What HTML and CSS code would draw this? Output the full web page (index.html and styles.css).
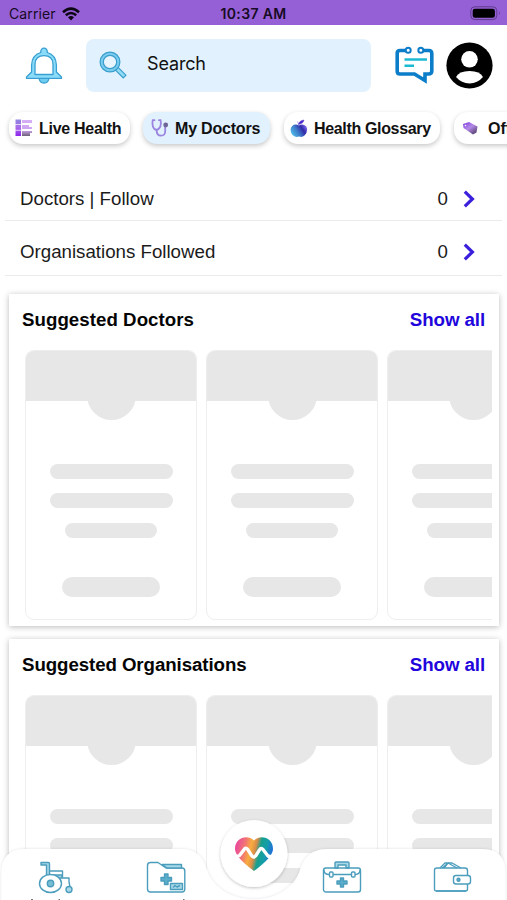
FILE: index.html
```html
<!DOCTYPE html>
<html lang="en">
<head>
<meta charset="utf-8">
<title>My Doctors</title>
<link rel="stylesheet" href="styles.css">
</head>
<body>
<div class="app">
  <header class="status">
    <div class="carrier"><span>Carrier</span>
      <svg width="18" height="14" viewBox="0 0 18 14"><g fill="none" stroke="#0c0713" stroke-width="2.5"><path d="M1 5.2Q9-2 17 5.2"/><path d="M3.8 8.3Q9 3.7 14.2 8.3"/></g><path d="M6 10.3Q9 7.8 12 10.3L9 13.4Z" fill="#0c0713"/></svg>
    </div>
    <time>10:37 AM</time>
    <svg class="battery" width="31" height="15" viewBox="0 0 31 15"><rect x=".8" y=".8" width="26" height="12.8" rx="4" fill="none" stroke="#5f3c8c"/><rect x="2.7" y="2.7" width="22.2" height="9" rx="2.3" fill="#000"/><path d="M29 5q1.6 2.2 0 4.400z" fill="#5f3c8c"/></svg>
  </header>

  <div class="topbar">
    <svg class="bell" width="38" height="38" viewBox="0 0 38 38"><g stroke="#3a9fd2" stroke-width="1.3" stroke-linejoin="round"><path d="M14 31h10q-.5 5-5 5t-5-5z" fill="#6fcdf0"/><path fill-rule="evenodd" d="M15.700 5.500Q15.700 1.200 19 1.200T22.300 5.500Q31 8 31.400 18V25L36.500 30V31.400H1.500V30L6.600 25V18Q7 8 15.700 5.500ZM10 27.500H28V17Q27.500 8.700 19 8.700T10 17Z" fill="#8bdcf8"/></g></svg>
    <div class="search">
      <svg width="28" height="28" viewBox="0 0 28 28"><path d="M17.500 17.500L26 26" stroke="#399ecb" stroke-width="5"/><path d="M18 18L25.200 25.200" stroke="#93dcf6" stroke-width="2.600"/><circle cx="11" cy="11" r="8.300" fill="#e8f5ff" stroke="#399ecb" stroke-width="4.400"/><circle cx="11" cy="11" r="8.300" fill="none" stroke="#7bcdf0" stroke-width="2"/></svg>
      <span>Search</span>
    </div>
    <svg class="chat" width="40" height="38" viewBox="0 0 40 38"><path d="M11 4.500H5Q2.200 4.500 2.200 7.300V25.200Q2.200 28 5 28H19.500L30 34.500V28H33.500Q36.800 28 36.800 25V7.300Q36.800 4.500 34 4.500H28" fill="none" stroke="#0b7dc9" stroke-width="3.600"/><g fill="#fff" stroke="#0b7dc9" stroke-width="2"><circle cx="13.200" cy="4.300" r="2.500"/><circle cx="25.800" cy="4.300" r="2.500"/></g><path d="M9.500 13.500H32M9.500 19.800H19" stroke="#1dbbd3" stroke-width="2.500"/></svg>
    <svg class="avatar" width="47" height="47" viewBox="0 0 47 47"><circle cx="23.500" cy="23.500" r="23.100"/><circle cx="23.500" cy="17.300" r="8.300" fill="#fff"/><path d="M10 35Q13 29 23.500 29T37 35Q31.500 41.400 23.500 41.400T10 35Z" fill="#fff"/></svg>
  </div>

  <nav class="chips">
    <a class="chip live"><svg width="18" height="18" viewBox="0 0 18 18"><defs><linearGradient id="lv" x2="0" y2="1"><stop stop-color="#8e87df"/><stop offset=".5" stop-color="#a96bea"/><stop offset="1" stop-color="#8d25ee"/></linearGradient><linearGradient id="lr" x2="0" y2="1"><stop stop-color="#d5b0f5"/><stop offset=".65" stop-color="#cda3f1"/><stop offset="1" stop-color="#6d6376"/></linearGradient></defs><path d="M.500.500H6V17H.500z" fill="url(#lv)"/><path d="M7 1H17V4H7zM7 6H14V8H17V10H7zM7 12H17V14H15V17H7z" fill="url(#lr)"/><path d="M0 5.500H17M0 11.300H17" stroke="#fff" stroke-width=".700"/></svg><span>Live Health</span></a>
    <a class="chip doctors active"><svg width="18" height="18" viewBox="0 0 18 18"><g fill="none" stroke="#9a84df" stroke-width="1.800" stroke-linecap="round"><path d="M3.500 1.200H1.800Q.7 7 3 9.500Q5.500 12 8 9.500Q10.700 7 9.500 1.200H8"/><path d="M5.600 11Q5.600 16.700 10 16.700T14.200 12V7.500"/></g><circle cx="14.700" cy="6" r="2.400" fill="#6e6696"/></svg><span>My Doctors</span></a>
    <a class="chip glossary"><svg width="18" height="19" viewBox="0 0 18 19"><defs><linearGradient id="ap" x1="0" y1=".8" x2="1" y2=".3"><stop stop-color="#53c6ed"/><stop offset=".45" stop-color="#3d78c7"/><stop offset=".75" stop-color="#312aa9"/><stop offset="1" stop-color="#7c6bea"/></linearGradient></defs><path d="M9 6.500Q13 4 16.300 7.500Q18.700 12 14.500 16.500Q12 18.800 9 17.500Q5 19 2 15.500Q-1 10 2.200 7Q5.300 4.500 9 6.500Z" fill="url(#ap)"/><path d="M8.500 5.500Q9 1.500 14 1Q13.500 4.500 8.500 5.500ZM7.500 2.500L9 6" fill="#4c2ac8" stroke="#4c2ac8" stroke-width=".4"/></svg><span>Health Glossary</span></a>
    <a class="chip offers"><svg width="17" height="15" viewBox="0 0 17 15"><defs><linearGradient id="tg" x2=".8" y2="1"><stop stop-color="#7d38dc"/><stop offset=".5" stop-color="#b58be9"/><stop offset="1" stop-color="#54416d"/></linearGradient></defs><path d="M1 3L7 1L15.500 5.500L14.500 11.500L11 13.500L1.500 7Z" fill="url(#tg)"/><circle cx="3.500" cy="4.500" r=".8" fill="#fff"/></svg><span>Offers</span></a>
  </nav>

  <main>
    <ul class="follow">
      <li><span>Doctors | Follow</span><b>0</b><svg width="12" height="18" viewBox="0 0 12 18"><path d="M1.800 1.600L9.400 9L1.800 16.400" fill="none" stroke="#3a1fdc" stroke-width="3.200"/></svg></li>
      <li><span>Organisations Followed</span><b>0</b><svg width="12" height="18" viewBox="0 0 12 18"><path d="M1.800 1.600L9.400 9L1.800 16.400" fill="none" stroke="#3a1fdc" stroke-width="3.200"/></svg></li>
    </ul>

    <section class="panel">
      <div class="head"><h2 class="t1">Suggested Doctors</h2><a>Show all</a></div>
      <div class="cards">
        <div class="card"><div class="cover"></div><i></i><i></i><i class="short"></i><i class="button"></i></div>
        <div class="card"><div class="cover"></div><i></i><i></i><i class="short"></i><i class="button"></i></div>
        <div class="card"><div class="cover"></div><i></i><i></i><i class="short"></i><i class="button"></i></div>
      </div>
    </section>

    <section class="panel">
      <div class="head"><h2 class="t2">Suggested Organisations</h2><a>Show all</a></div>
      <div class="cards">
        <div class="card"><div class="cover"></div><i></i><i></i><i class="short"></i><i class="button"></i></div>
        <div class="card"><div class="cover"></div><i></i><i></i><i class="short"></i><i class="button"></i></div>
        <div class="card"><div class="cover"></div><i></i><i></i><i class="short"></i><i class="button"></i></div>
      </div>
    </section>
  </main>

  <footer class="tabbar">
    <svg width="507" height="85" viewBox="0 0 507 85">
      <defs>
        <linearGradient id="heart" x1="0" y1=".4" x2="1" y2=".6"><stop stop-color="#e94b9b"/><stop offset=".22" stop-color="#f27573"/><stop offset=".38" stop-color="#f8ad3e"/><stop offset=".5" stop-color="#dc8d48"/><stop offset=".62" stop-color="#16a08e"/><stop offset=".78" stop-color="#159daa"/><stop offset="1" stop-color="#245ee9"/></linearGradient>
        <filter id="soft" x="-20%" y="-20%" width="140%" height="140%"><feDropShadow dx="0" dy="0" stdDeviation="1.5" flood-color="#000" flood-opacity=".13"/></filter>
        <filter id="lift" x="-20%" y="-20%" width="140%" height="140%"><feDropShadow dx="0" dy="1" stdDeviation="1.800" flood-color="#000" flood-opacity=".25"/></filter>
      </defs>
      <path filter="url(#soft)" d="M1.500 95V58Q1.500 34 25 34H180C201 34 204 47 208 58C216 76 235 84.500 254 84.500S291 76 299 58C303 47 307 34 328 34H482Q505.500 34 505.500 58V95Z" fill="#fff"/>
      <circle cx="254" cy="38.500" r="33.500" fill="#fff" filter="url(#lift)"/>
      <path d="M254 25.500C247 19 235 23 235 34Q235 42 254 56Q273 42 273 34C273 23 261 19 254 25.500Z" fill="url(#heart)"/>
      <path d="M234.500 42.500L239.500 40.500L244.500 34Q246.200 32.200 248 34.800L251.800 40.800Q253.700 43.300 255.700 40.800L259.500 34.800Q261.200 32.200 263 34.500L268 41L273.500 42.500" fill="none" stroke="#fff" stroke-width="3.400" stroke-linejoin="round"/>

      <g class="line" transform="translate(38 46)">
        <path d="M3 1.500H10.500Q11.500 1.500 11.500 3V14H24V17H8.500V4H3Z" fill="#a9d9e8"/>
        <path d="M11.500 10H24.500V16M24 17H31V21L32 26" />
        <ellipse cx="12.500" cy="22.500" rx="11" ry="9" fill="#fff"/>
        <circle cx="12.500" cy="22.500" r="3.200" fill="#76bdd5"/>
        <circle cx="31" cy="28.500" r="3" fill="#a9d9e8"/>
      </g>
      <g class="line" transform="translate(146 46)">
        <path d="M1.500 4.500Q1.500 1.500 4.500 1.500H12L20 7H36Q38.800 7 38.800 10V28Q38.800 31 36 31H4.500Q1.500 31 1.500 28Z"/>
        <path d="M16 3.500H35.500V7H21Z" fill="#a9d9e8"/>
        <path class="fill" d="M18.500 13H22V16.500H25.500V20H22V23.500H18.500V20H15V16.500H18.500Z"/>
        <path d="M24.500 22.500H36.500V28.500H24.500Z" fill="#a9d9e8"/><path d="M27 26.500L29 24.500L31 26L34 24.500"/>
      </g>
      <g class="line" transform="translate(322 46)">
        <path d="M13 7V2Q13 1 14 1H26Q27 1 27 2V7H24V4H16V7Z" fill="#a9d9e8"/>
        <rect x="1.500" y="7" width="37" height="24" rx="2.500"/>
        <path d="M2 9Q2 13.500 7 13.500H33Q38 13.500 38 9"/>
        <rect x="7.500" y="11" width="3.500" height="5" rx="1" fill="#fff"/><rect x="29.500" y="11" width="3.500" height="5" rx="1" fill="#fff"/>
        <path class="fill" d="M18.500 17H21.500V20H25V23H21.500V26H18.500V23H15V20H18.500Z"/>
      </g>
      <g class="line" transform="translate(433 46)">
        <path d="M7 7L12 2H15L9.500 7M11 7L15 2L24 7"/><path d="M15 2H19L28 7" />
        <path d="M1.500 9Q1.500 7 4 7H32Q34.500 7 34.500 9.500V28Q34.500 30 32.500 30H3.500Q1.500 30 1.500 28Z"/>
        <path d="M3 30H33"/>
        <rect x="20.500" y="14.500" width="17" height="8.500" rx="2.500" fill="#fff"/><circle cx="25.500" cy="18.800" r="1.500" class="fill"/>
      </g>
      <path d="M31 84.500H33M58.500 84.500H60M183 84.500H184.500" stroke="#777" stroke-width="1"/>
    </svg>
  </footer>
</div>
</body>
</html>
```
FILE: styles.css
```css
* { box-sizing: border-box; }
body { margin: 0; background: #fff; font-family: "Liberation Sans", Arial, sans-serif; color: #111; }
.app { width: 507px; height: 900px; overflow: hidden; position: relative; }
svg { display: block; flex: none; }

.status { height: 25px; background: #955fd6; display: grid; grid-template-columns: 1fr auto 1fr; align-items: center; padding: 2px 7px 0 9px; font-family: Inter, sans-serif; font-size: 14px; color: #170b25; }
.carrier { display: flex; align-items: center; gap: 6px; letter-spacing: .1px; }
.status time { font-weight: 600; font-size: 14px; letter-spacing: .35px; margin-left: -2px; }
.battery { justify-self: end; margin-right: -1px; margin-top: -1px; }

.topbar { height: 80px; display: flex; align-items: center; padding-left: 25px; }
.bell { margin-top: 2px; }
.search { width: 285px; height: 53px; margin-left: 23px; background: #e1f1fe; border-radius: 8px; display: flex; align-items: center; padding-left: 13px; gap: 20px; font-family: Inter, sans-serif; font-size: 18px; }
.search span { margin-top: -3px; letter-spacing: -.15px; }
.search svg { margin-top: -1px; }
.chat { margin-left: 24px; }
.avatar { margin-left: 11px; }

.chips { height: 63px; display: flex; gap: 13px; padding: 7px 0 0 9px; overflow: hidden; }
.chip { flex: none; height: 32px; border-radius: 14px; background: #fff; box-shadow: 0 2px 5px rgba(0,0,0,.22); display: flex; align-items: center; padding-left: 6px; gap: 6px; font-size: 16px; font-weight: bold; white-space: nowrap; }
.chip span { padding-top: 2px; }
.chip.active { background: #e1f1fe; }
.live { width: 121px; }
.live span { letter-spacing: -.28px; }
.doctors { width: 127px; padding-left: 8px; }
.doctors span { letter-spacing: -.2px; }
.glossary { width: 156px; margin-left: 1px; }
.glossary span { letter-spacing: -.34px; }
.offers { width: 110px; margin-left: 1px; padding-left: 8px; gap: 9px; }

.follow { list-style: none; margin: 0 5px; padding: 0; height: 108px; }
.follow li { height: 54.500px; display: flex; align-items: center; padding: 9px 27px 0 15px; border-bottom: 1px solid #ebebeb; font-size: 18.700px; color: #1b1b1b; }
.follow li:first-child { height: 53px; padding-top: 10px; }
.follow span { flex: 1; }
.follow b { font-weight: normal; margin-right: 15px; }

.panel { margin: 18px 8px 0 9px; height: 332px; background: #fff; box-shadow: 0 1px 6px rgba(0,0,0,.27); }
.panel + .panel { margin-top: 13px; }
.head { height: 56px; display: flex; justify-content: space-between; align-items: center; padding: 0 14px 4px 13px; font-size: 18.700px; font-weight: bold; }
.head h2 { margin: 0; font-size: inherit; color: #050505; }
.t1 { letter-spacing: .04px; }
.t2 { letter-spacing: -.08px; }
.head a { color: #2105dc; letter-spacing: -.08px; }
.cards { display: flex; gap: 9px; margin: 0 7px 0 16px; overflow: hidden; }
.card { flex: none; width: 172px; height: 270px; border: 1.500px solid #eee; border-radius: 9px; overflow: hidden; display: flex; flex-direction: column; align-items: center; }
.cover { width: 100%; height: 50px; background: #e7e7e7; display: flex; justify-content: center; flex: none; margin-bottom: 63px; }
.cover::after { content: ""; flex: none; width: 49px; height: 49px; border-radius: 50%; background: #e7e7e7; margin-top: 20px; }
.card i { flex: none; width: 123px; height: 15px; border-radius: 8px; background: #e7e7e7; margin-bottom: 14.300px; }
.card .short { width: 92px; }
.card .button { width: 98px; height: 20px; border-radius: 10px; margin-top: 25.500px; }

.tabbar { position: absolute; left: 0; bottom: 0; }
.line { fill: none; stroke: #4b9dbd; stroke-width: 1.400; stroke-linejoin: round; }
.line .fill { fill: #5aaeca; }
```
